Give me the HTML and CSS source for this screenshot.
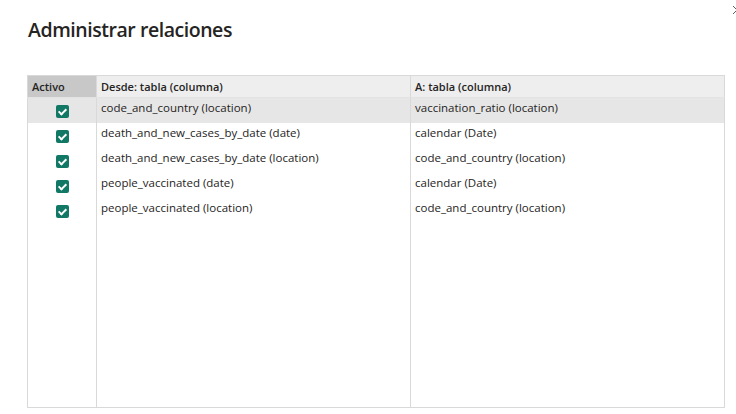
FILE: index.html
```html
<!DOCTYPE html>
<html lang="es">

<head>
    <meta charset="UTF-8">
    <meta name="viewport" content="width=device-width, initial-scale=1.0">
    <title>Administrar relaciones</title>
    <link rel="stylesheet" href="styles.css">
</head>

<body>
    <main class="dialog">
        <svg class="close" width="10" height="10" viewBox="0 0 10 10">
            <path d="M1 1 L9 9 M9 1 L1 9" stroke="#605e5c" stroke-width="1" fill="none" />
        </svg>
        <h1 class="title">Administrar relaciones</h1>
        <table class="rel">
            <thead>
                <tr>
                    <th class="col-active">Activo</th>
                    <th class="col-from">Desde: tabla (columna)</th>
                    <th class="col-to">A: tabla (columna)</th>
                </tr>
            </thead>
            <tbody>
                <tr class="selected">
                    <td class="chk"><span class="box"></span></td>
                    <td>code_and_country (location)</td>
                    <td>vaccination_ratio (location)</td>
                </tr>
                <tr>
                    <td class="chk"><span class="box"></span></td>
                    <td>death_and_new_cases_by_date (date)</td>
                    <td>calendar (Date)</td>
                </tr>
                <tr>
                    <td class="chk"><span class="box"></span></td>
                    <td>death_and_new_cases_by_date (location)</td>
                    <td>code_and_country (location)</td>
                </tr>
                <tr>
                    <td class="chk"><span class="box"></span></td>
                    <td>people_vaccinated (date)</td>
                    <td>calendar (Date)</td>
                </tr>
                <tr>
                    <td class="chk"><span class="box"></span></td>
                    <td>people_vaccinated (location)</td>
                    <td>code_and_country (location)</td>
                </tr>
                <tr class="filler">
                    <td></td>
                    <td></td>
                    <td></td>
                </tr>
            </tbody>
        </table>
    </main>
</body>

</html>
```

FILE: styles.css
```css
html,
body {
    margin: 0;
    padding: 0;
    box-sizing: border-box;
}

body {
    width: 736px;
    height: 414px;
    background: #fff;
    font-family: "Open Sans", "Noto Sans", sans-serif;
    color: #252423;
    overflow: hidden;
}

.dialog {
    position: relative;
    padding: 14px 0 0 27px;
}

.close {
    position: absolute;
    top: 5px;
    right: -6px;
}

.title {
    margin: 0 0 0 1px;
    font-size: 19.5px;
    font-weight: 600;
    line-height: 32px;
    letter-spacing: -0.45px;
}

.rel {
    margin-top: 29px;
    width: 698px;
    height: 333px;
    border-collapse: collapse;
    border: 1px solid #d9d9d9;
    font-size: 11.5px;
}

.rel th,
.rel td {
    border-left: 1px solid #d9d9d9;
    border-right: 1px solid #d9d9d9;
    padding: 0 4px;
    text-align: left;
    white-space: nowrap;
}

.rel th {
    height: 21px;
    background: #eeeeee;
    font-weight: 600;
    font-size: 11px;
    border-bottom: 1px solid #e3e3e3;
}

.rel th.col-active {
    width: 60px;
    background: #c8c8c8;
}

.rel th.col-from {
    width: 305px;
}

.rel td {
    height: 25px;
    padding-bottom: 5px;
    box-sizing: border-box;
}

.rel td.chk {
    padding-bottom: 0;
    text-align: center;
}

.rel tr.selected td {
    background: #e6e6e6;
}

.rel tr.filler td {
    height: auto;
}

.box {
    display: inline-block;
    width: 13px;
    height: 13px;
    border-radius: 2px;
    background: #117865;
    vertical-align: middle;
    position: relative;
}

.box::after {
    content: "";
    position: absolute;
    left: 4px;
    top: 2px;
    width: 3px;
    height: 6px;
    border: solid #fff;
    border-width: 0 2px 2px 0;
    transform: rotate(45deg);
}
```
